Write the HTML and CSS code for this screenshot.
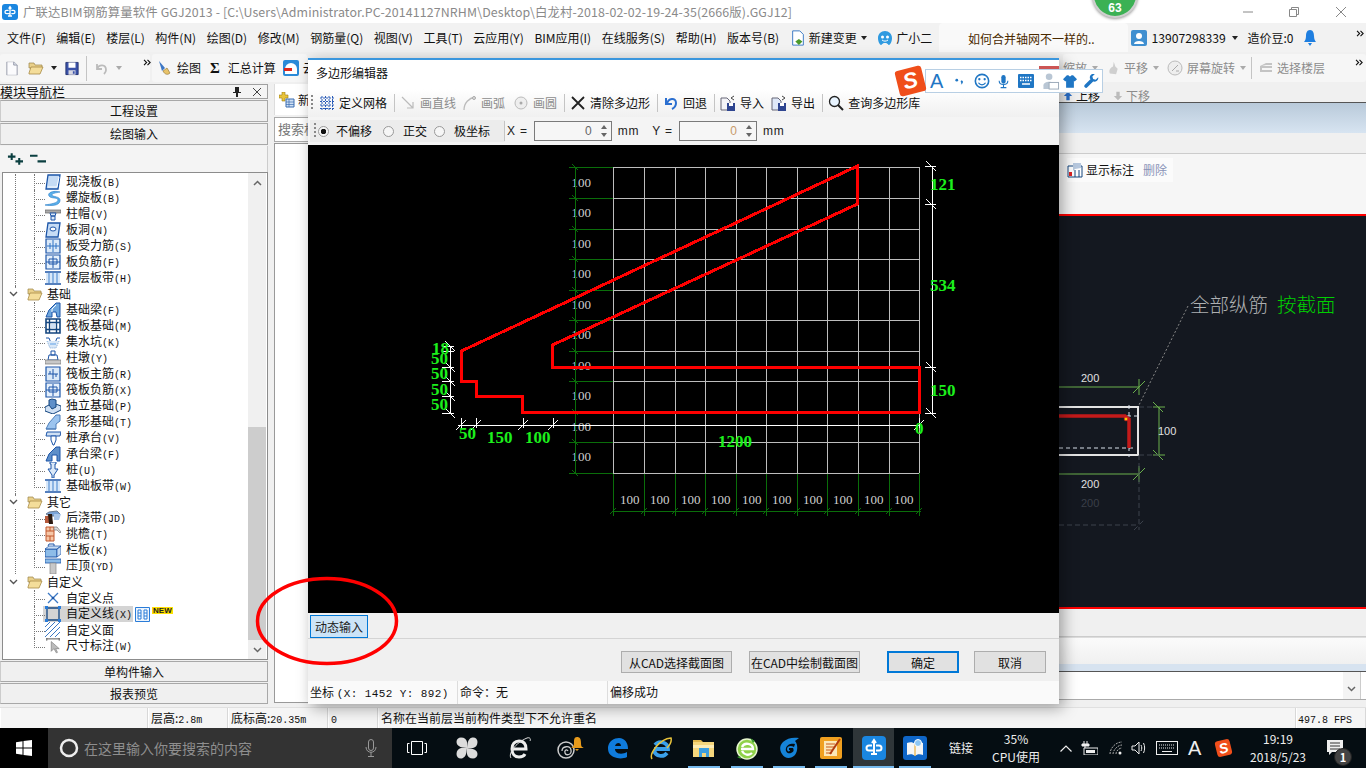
FILE: index.html
```html
<!DOCTYPE html>
<html lang="zh">
<head>
<meta charset="utf-8">
<title>广联达BIM钢筋算量软件 GGJ2013</title>
<link rel="stylesheet" href="styles.css">
</head>
<body>
<svg class="sprite" aria-hidden="true">
  <defs>
    <symbol id="slab" viewBox="0 0 16 16"><path d="M3 1h12l-2 14H1z" fill="#c6dcf5" stroke="#1c55a8" stroke-width="1.3"/><path d="M3 13l9 0 2-10" fill="none" stroke="#fff"/></symbol>
    <symbol id="spiral" viewBox="0 0 16 16"><path d="M15 2C8 0 2 3 4 6s9 1 9 4-7 4-13 5c6 1 14 1 15-4S7 7 7 5s4-2 8-3z" fill="#5ab0ea" stroke="#2a7cc8" stroke-width=".6"/></symbol>
    <symbol id="cap" viewBox="0 0 16 16"><path d="M0 4h16v3H0z" fill="#aaa" stroke="#666" stroke-width=".7"/><path d="M5 7h6l-1 3H6zM6 10h4v4H6z" fill="#dbe9f8" stroke="#1c55a8"/></symbol>
    <symbol id="hole" viewBox="0 0 16 16"><path d="M3 1h12l-2 14H1z" fill="#c6dcf5" stroke="#1c55a8" stroke-width="1.3"/><ellipse cx="8" cy="7" rx="3" ry="2" fill="#fff" stroke="#1c55a8"/></symbol>
    <symbol id="rebar" viewBox="0 0 16 16"><path d="M1 1h14v14H1z" fill="#dbe9f8" stroke="#1c55a8" stroke-width="1.2"/><path d="M2 8h12M8 2v12M5 5v6M11 5v6" fill="none" stroke="#2f72c4"/></symbol>
    <symbol id="neg" viewBox="0 0 16 16"><path d="M1 1h14v14H1z" fill="#e6f0fb" stroke="#1c55a8" stroke-width="1.2"/><path d="M4 5h8v5H4zM1 8h14M8 2v12" fill="none" stroke="#1c55a8"/></symbol>
    <symbol id="band" viewBox="0 0 16 16"><path d="M0 2h16M0 14h16" stroke="#1c55a8" stroke-width="1.6"/><path d="M4 3v10M8 3v10M12 3v10" stroke="#2f72c4" stroke-width="1.2"/><path d="M1 3h14v10H1z" fill="#9cc4ef" opacity=".4"/></symbol>
    <symbol id="beam" viewBox="0 0 16 16"><path d="M1 15l3-7 7-7h4v14h-3l-1-5H7v5z" fill="#6ea6dd" stroke="#1c55a8"/><path d="M7 10V7l4-4" stroke="#fff" fill="none"/></symbol>
    <symbol id="raft" viewBox="0 0 16 16"><path d="M1 1h14v14H1z" fill="#fff" stroke="#14467f" stroke-width="1.6"/><path d="M4.500 1v14M11.500 1v14M1 4.500h14M1 11.500h14" stroke="#14467f" stroke-width="1.4"/><path d="M6 6h4v4H6z" fill="#cfe0f4"/></symbol>
    <symbol id="pit" viewBox="0 0 16 16"><path d="M1 4l3 0 2 5h4l2-5h3" fill="none" stroke="#1c55a8"/><path d="M2 7l3 7h6l3-7" fill="#d8e7f7" stroke="#7fa9d8" stroke-dasharray="1 1"/><path d="M5 9h6v2H5z" fill="#9cc4ef"/></symbol>
    <symbol id="pier" viewBox="0 0 16 16"><path d="M6 1h4v4H6zM4 5h8l1 5H3z" fill="#fff" stroke="#1c55a8"/><path d="M0 10h16v4H0z" fill="#c8c8c8" stroke="#777" stroke-width=".7"/></symbol>
    <symbol id="rafm" viewBox="0 0 16 16"><path d="M1 1h14v14H1z" fill="#dbe9f8" stroke="#1c55a8" stroke-width="1.2"/><path d="M3 8h10M8 3v10M5 5v3M11 8v3" fill="none" stroke="#1c55a8"/></symbol>
    <symbol id="iso" viewBox="0 0 16 16"><path d="M0 9l8-4 8 3v4l-8 4-8-3z" fill="#cfe0f4" stroke="#14467f"/><path d="M4 7V2l3-1 4 1v7l-4 2z" fill="#5e8fc9" stroke="#14467f"/></symbol>
    <symbol id="strip" viewBox="0 0 16 16"><path d="M1 15l3-6 7-8h4v6l-4 3v5z" fill="#9cc4ef" stroke="#4c7db8"/><path d="M1 15h10" stroke="#4c7db8"/></symbol>
    <symbol id="pilecap" viewBox="0 0 16 16"><path d="M2 2h14l-1 4H1z" fill="#cfe0f4" stroke="#1c55a8"/><path d="M6 6h5v4l-2 5H8l-2-5z" fill="#fff" stroke="#1c55a8"/></symbol>
    <symbol id="capbeam" viewBox="0 0 16 16"><path d="M1 15l3-7 7-7h4v14h-3V9H7v6z" fill="#5e8fc9" stroke="#1c55a8"/></symbol>
    <symbol id="pile" viewBox="0 0 16 16"><path d="M5 0h6v2h-1v5h3l-4 6v3H7v-3L3 7h3V2H5z" fill="#dbe9f8" stroke="#1c55a8"/></symbol>
    <symbol id="post" viewBox="0 0 16 16"><path d="M4 2l8-1 3 3-3 2H5L1 4z" fill="#7aa4d8" stroke="#6b7d94"/><path d="M0 6h5l3 7-8 0z" fill="#b5583a"/><path d="M3 4h4l1 10H4z" fill="#2b1a10"/><path d="M9 4h7l-2 6H9z" fill="#a9c6ea"/></symbol>
    <symbol id="eave" viewBox="0 0 16 16"><path d="M1 1h8v14H1z" fill="#f6c6a6" stroke="#c0562c"/><path d="M1 5h8M1 10h8M5 1v4M5 10v5" stroke="#c0562c" fill="none"/><path d="M9 1h3l4 5-1 1-3-3H9z" fill="#ddd" stroke="#777" stroke-width=".7"/></symbol>
    <symbol id="rail" viewBox="0 0 16 16"><path d="M0 7h12v8H0z" fill="#8dbce8" stroke="#1c55a8"/><path d="M0 7l4-3h12l-4 3zM12 7l4-3v8l-4 3z" fill="#c7dcf3" stroke="#1c55a8" stroke-width=".7"/><path d="M3 4l1-2h5v2" fill="none" stroke="#1c55a8"/></symbol>
    <symbol id="top" viewBox="0 0 16 16"><path d="M0 1h16v4H0z" fill="#8dbce8" stroke="#1c55a8" stroke-width=".8"/><path d="M5 5h6v11H5z" fill="#c8c8c8" stroke="#888" stroke-width=".7"/></symbol>
    <symbol id="pt" viewBox="0 0 16 16"><path d="M3 3l10 10M13 3L3 13" stroke="#3b78c4" stroke-width="1.3"/><circle cx="8" cy="8" r="1.300" fill="#1c55a8"/></symbol>
    <symbol id="ln" viewBox="0 0 16 16"><path d="M2 2h12v12H2z" fill="none" stroke="#14467f" stroke-width="1.3"/><path d="M0 0h3v3H0zM13 0h3v3h-3zM0 13h3v3H0zM13 13h3v3h-3z" fill="#2a7cd8"/></symbol>
    <symbol id="hatch" viewBox="0 0 16 16"><path d="M0 5l5-5M0 10L10 0M0 15L15 0M5 15L15 5M10 15l5-5" stroke="#3b78c4"/></symbol>
    <symbol id="dim" viewBox="0 0 16 18"><path d="M1 1h14M1 0v3M15 0v3" stroke="#444" fill="none"/><path d="M6 4v11l3-3 3 5 1-1-2-4h4z" fill="#bbb" stroke="#777" stroke-width=".7"/></symbol>
    <symbol id="folder" viewBox="0 0 16 14"><path d="M1 2h5l1 2h7v3H1z" fill="#e9d08a" stroke="#9c8447" stroke-width=".7"/><path d="M1 12L3 6h12l-3 7H1z" fill="#f4dd9a" stroke="#a88c46" stroke-width=".8"/></symbol>
    <symbol id="floppy" viewBox="0 0 16 16"><path d="M1 1h14v14H1z" fill="#3a52a8" stroke="#1f2d6b"/><path d="M4 1h8v6H4z" fill="#fff"/><path d="M4 10h8v5H4z" fill="#d8d8e2"/><path d="M9 11h2v3H9z" fill="#3a52a8"/></symbol>
    <symbol id="doc" viewBox="0 0 14 16"><path d="M1 0h8l4 4v12H1z" fill="#fbfbfd" stroke="#8a8fa0"/><path d="M9 0v4h4" fill="#dfe3ec" stroke="#8a8fa0"/></symbol>
    <symbol id="smallup" viewBox="0 0 12 12"><path d="M6 1l5 5H8v5H4V6H1z"/></symbol>
    <symbol id="dbl" viewBox="0 0 10 8"><path d="M1 1l3 3-3 3M5 1l3 3-3 3" fill="none" stroke="#111" stroke-width="1.300"/></symbol>
    <symbol id="gglogo" viewBox="0 0 24 24"><path d="M12 5v14M10 7l2-3 2 3M9 18h6" fill="none" stroke="#fff" stroke-width="2"/><path d="M12 14.500H7a2.500 2.500 0 0 1 0-5h3M14 9.500h3a2.500 2.500 0 0 1 0 5h-3" fill="none" stroke="#fff" stroke-width="2"/></symbol>
  </defs>
</svg>

<div class="app">
  <header class="titlebar">
    <span class="app-ico"><svg viewBox="0 0 24 24"><use href="#gglogo"/></svg></span>
    <span class="title-text">广联达BIM钢筋算量软件 GGJ2013 - [C:\Users\Administrator.PC-20141127NRHM\Desktop\白龙村-2018-02-02-19-24-35(2666版).GGJ12]</span>
    <div class="win-ctl">
      <svg class="ctl-min" viewBox="0 0 10 10"><path d="M0 5h10" stroke="#888"/></svg>
      <svg class="ctl-max" viewBox="0 0 10 10"><path d="M.5 2.500h7v7h-7zM2.500 2.500v-2h7v7h-2" fill="none" stroke="#888"/></svg>
      <svg class="ctl-close" viewBox="0 0 10 10"><path d="M0 0l10 10M10 0L0 10" stroke="#888"/></svg>
    </div>
  </header>

  <nav class="menubar">
    <span>文件(F)</span><span>编辑(E)</span><span>楼层(L)</span><span>构件(N)</span><span>绘图(D)</span><span>修改(M)</span><span>钢筋量(Q)</span><span>视图(V)</span><span>工具(T)</span><span>云应用(Y)</span><span>BIM应用(I)</span><span>在线服务(S)</span><span>帮助(H)</span><span>版本号(B)</span>
    <span class="menu-ico"><svg class="i16" viewBox="0 0 16 18"><path d="M2 1h8l4 4v12H2z" fill="#fff" stroke="#2b6fc0"/><path d="M9 10l4 3-4 4-4-4z" fill="#4c9a2a"/></svg>新建变更<i class="caret"></i></span>
    <span class="menu-ico"><svg class="i16" viewBox="0 0 16 16"><path d="M8 1c4 0 7 3 7 7s-2 7-3 7-1-2-4-2-3 2-4 2-3-3-3-7 3-7 7-7z" fill="#2f9ae0"/><circle cx="5.500" cy="7" r="1.500" fill="#fff"/><circle cx="10.500" cy="7" r="1.500" fill="#fff"/><path d="M5 10c2 1.500 4 1.500 6 0" stroke="#fff" fill="none"/></svg>广小二</span>
    <span class="news">如何合并轴网不一样的..</span>
    <span class="menu-ico user"><svg class="i16" viewBox="0 0 16 16"><rect width="16" height="16" rx="2" fill="#3f8fd0"/><circle cx="8" cy="6" r="3" fill="#fff"/><path d="M3 14c0-4 10-4 10 0z" fill="#fff"/></svg><b class="phone">13907298339</b><i class="caret"></i></span>
    <span class="beans">造价豆:0</span>
    <svg class="bell" viewBox="0 0 12 16"><path d="M6 0c3 0 4 3 4 6s1 5 2 6H0c1-1 2-3 2-6s1-6 4-6zM4 13h4l-2 3z" fill="#1f7fe0"/></svg>
    <svg class="more" viewBox="0 0 10 8"><use href="#dbl"/></svg>
  </nav>

  <div class="toolbar">
    <div class="tb-group first">
      <svg class="t-doc" viewBox="0 0 14 16"><use href="#doc"/></svg>
      <svg class="t-open" viewBox="0 0 16 14"><use href="#folder"/></svg>
      <i class="caret"></i>
      <svg class="t-save" viewBox="0 0 16 16"><use href="#floppy"/></svg>
      <i class="vsep"></i>
      <svg class="t-undo" viewBox="0 0 14 14"><path d="M3 3v5h5M3 8c2-5 9-5 9 1 0 2-1 3-2 4" fill="none" stroke="#bbb" stroke-width="1.800"/></svg>
      <i class="caret light"></i>
      <svg class="t-more" viewBox="0 0 10 8"><use href="#dbl"/></svg>
    </div>
    <div class="tb-group second">
      <svg class="i16" viewBox="0 0 16 16"><path d="M2 1l6 7-3 3z" fill="#3c76c4"/><path d="M6 11l4-3 3 5c-2 2-5 2-7-2z" fill="#e8c36a" stroke="#8a6b2a" stroke-width=".6"/></svg><span>绘图</span>
      <b class="sigma">Σ</b><span>汇总计算</span>
      <svg class="i16 cloud" viewBox="0 0 16 16"><rect width="16" height="16" rx="2" fill="#2a8ad8"/><path d="M2 9a6 6 0 0 1 12 0v5H2z" fill="#fff"/><path d="M1 8h8v3H1z" fill="#e0281c"/></svg><span>云</span>
    </div>
    <div class="tb-group third">
      <span class="dis">缩放</span><i class="caret light"></i>
      <svg class="i14" viewBox="0 0 14 18"><path d="M3 16c-2-4 1-8 4-9l1-6 2 6 3 3-2 7z" fill="#cfcfcf"/></svg><span class="dis">平移</span><i class="caret light"></i>
      <svg class="i16" viewBox="0 0 16 16"><circle cx="8" cy="8" r="7" fill="#eee" stroke="#bbb"/><path d="M5 11l6-6M9 11h3" stroke="#aaa"/></svg><span class="dis">屏幕旋转</span><i class="caret light"></i>
      <i class="vsep"></i>
      <svg class="i14" viewBox="0 0 14 14"><path d="M1 5l6-3h6v2H7L3 5h10v2H3v2h10v2H1z" fill="#c4c4c4"/></svg><span class="dis">选择楼层</span>
      <svg class="t-more2" viewBox="0 0 10 8"><use href="#dbl"/></svg>
    </div>
  </div>

  <div class="workspace">
    <aside class="nav">
      <div class="nav-head"><span>模块导航栏</span><span class="nav-btns"><svg class="i10" viewBox="0 0 10 10"><path d="M3 0h4v5h2v1H6v4H4V6H1V5h2z" fill="#222"/></svg><svg class="i10" viewBox="0 0 10 10"><path d="M1 1l8 8M9 1L1 9" stroke="#444"/></svg></span></div>
      <div class="nav-btn">工程设置</div>
      <div class="nav-btn">绘图输入</div>
      <div class="nav-tools">
        <svg class="plus" viewBox="0 0 17 14"><path d="M1 4.500h8M5 1v7M9 9.500h8M13 6v7" stroke="#0b3f40" stroke-width="2.200"/></svg>
        <svg class="plus" viewBox="0 0 17 14"><path d="M0 3.500h8M8 9.500h9" stroke="#0b3f40" stroke-width="2.200"/></svg>
      </div>
      <div class="tree">
        <div class="tree-body">
          <div class="group">
            <div class="kids">
              <div class="leaf"><svg class="i16"><use href="#slab"/></svg><span>现浇板<em>(B)</em></span></div>
              <div class="leaf"><svg class="i16"><use href="#spiral"/></svg><span>螺旋板<em>(B)</em></span></div>
              <div class="leaf"><svg class="i16"><use href="#cap"/></svg><span>柱帽<em>(V)</em></span></div>
              <div class="leaf"><svg class="i16"><use href="#hole"/></svg><span>板洞<em>(N)</em></span></div>
              <div class="leaf"><svg class="i16"><use href="#rebar"/></svg><span>板受力筋<em>(S)</em></span></div>
              <div class="leaf"><svg class="i16"><use href="#neg"/></svg><span>板负筋<em>(F)</em></span></div>
              <div class="leaf"><svg class="i16"><use href="#band"/></svg><span>楼层板带<em>(H)</em></span></div>
            </div>
          </div>
          <div class="group">
            <div class="folder"><svg class="tw" viewBox="0 0 9 6"><path d="M1 1l3.500 3.500L8 1" fill="none" stroke="#555" stroke-width="1.400"/></svg><svg class="fo" viewBox="0 0 16 14"><use href="#folder"/></svg><span>基础</span></div>
            <div class="kids">
              <div class="leaf"><svg class="i16"><use href="#beam"/></svg><span>基础梁<em>(F)</em></span></div>
              <div class="leaf"><svg class="i16"><use href="#raft"/></svg><span>筏板基础<em>(M)</em></span></div>
              <div class="leaf"><svg class="i16"><use href="#pit"/></svg><span>集水坑<em>(K)</em></span></div>
              <div class="leaf"><svg class="i16"><use href="#pier"/></svg><span>柱墩<em>(Y)</em></span></div>
              <div class="leaf"><svg class="i16"><use href="#rafm"/></svg><span>筏板主筋<em>(R)</em></span></div>
              <div class="leaf"><svg class="i16"><use href="#neg"/></svg><span>筏板负筋<em>(X)</em></span></div>
              <div class="leaf"><svg class="i16"><use href="#iso"/></svg><span>独立基础<em>(P)</em></span></div>
              <div class="leaf"><svg class="i16"><use href="#strip"/></svg><span>条形基础<em>(T)</em></span></div>
              <div class="leaf"><svg class="i16"><use href="#pilecap"/></svg><span>桩承台<em>(V)</em></span></div>
              <div class="leaf"><svg class="i16"><use href="#capbeam"/></svg><span>承台梁<em>(F)</em></span></div>
              <div class="leaf"><svg class="i16"><use href="#pile"/></svg><span>桩<em>(U)</em></span></div>
              <div class="leaf"><svg class="i16"><use href="#band"/></svg><span>基础板带<em>(W)</em></span></div>
            </div>
          </div>
          <div class="group">
            <div class="folder"><svg class="tw" viewBox="0 0 9 6"><path d="M1 1l3.500 3.500L8 1" fill="none" stroke="#555" stroke-width="1.400"/></svg><svg class="fo" viewBox="0 0 16 14"><use href="#folder"/></svg><span>其它</span></div>
            <div class="kids">
              <div class="leaf"><svg class="i16"><use href="#post"/></svg><span>后浇带<em>(JD)</em></span></div>
              <div class="leaf"><svg class="i16"><use href="#eave"/></svg><span>挑檐<em>(T)</em></span></div>
              <div class="leaf"><svg class="i16"><use href="#rail"/></svg><span>栏板<em>(K)</em></span></div>
              <div class="leaf"><svg class="i16"><use href="#top"/></svg><span>压顶<em>(YD)</em></span></div>
            </div>
          </div>
          <div class="group last">
            <div class="folder"><svg class="tw" viewBox="0 0 9 6"><path d="M1 1l3.500 3.500L8 1" fill="none" stroke="#555" stroke-width="1.400"/></svg><svg class="fo" viewBox="0 0 16 14"><use href="#folder"/></svg><span>自定义</span></div>
            <div class="kids">
              <div class="leaf"><svg class="i16"><use href="#pt"/></svg><span>自定义点</span></div>
              <div class="leaf selected"><div class="sel"><svg class="i16"><use href="#ln"/></svg><span>自定义线<em>(X)</em></span></div><svg class="i15" viewBox="0 0 15 15"><path d="M.5.500h14v14H.5z" fill="#eef5fd" stroke="#2a7cd8"/><path d="M3 3h3v9H3zM9 3h3v9H9z" fill="#fff" stroke="#2a7cd8"/><path d="M3 6h3M3 9h3M9 6h3M9 9h3" stroke="#2a7cd8"/></svg><b class="new">NEW</b></div>
              <div class="leaf"><svg class="i16"><use href="#hatch"/></svg><span>自定义面</span></div>
              <div class="leaf"><svg class="i16"><use href="#dim"/></svg><span>尺寸标注<em>(W)</em></span></div>
            </div>
          </div>
        </div>
        <div class="vscroll">
          <svg class="arrow" viewBox="0 0 9 6"><path d="M1 5l3.500-3.500L8 5" fill="none" stroke="#666" stroke-width="1.500"/></svg>
          <div class="track"><div class="thumb"></div></div>
          <svg class="arrow" viewBox="0 0 9 6"><path d="M1 1l3.500 3.500L8 1" fill="none" stroke="#666" stroke-width="1.500"/></svg>
        </div>
      </div>
      <div class="nav-btn low">单构件输入</div>
      <div class="nav-btn low">报表预览</div>
    </aside>

    <section class="side2">
      <div class="tab"><svg class="i16" viewBox="0 0 16 16"><path d="M3 0h3v3h3v3H6v3H3V6H0V3h3z" fill="#e8c33c" stroke="#9a7d16" stroke-width=".6"/><path d="M7 7h8v8H7z" fill="#cfe0f4" stroke="#3a6cb0"/><path d="M7 10h8M7 12.500h8M10 7v8" stroke="#3a6cb0" stroke-width=".7"/></svg><span>新</span></div>
      <div class="search">搜索构</div>
      <div class="list"></div>
    </section>

    <main class="main">
      <div class="row-move">
        <svg class="i10 up" viewBox="0 0 12 12"><use href="#smallup"/></svg><span>上移</span>
        <svg class="i10 down" viewBox="0 0 12 12"><path d="M4 1h4v5h3l-5 5-5-5h3z"/></svg><span class="dis">下移</span>
      </div>
      <div class="band"></div>
      <div class="bar1"></div>
      <div class="bar2">
        <div class="hover-box">
          <svg class="i16" viewBox="0 0 16 16"><path d="M1 4h14v11H1z" fill="#fff" stroke="#14467f"/><path d="M6 1h8v5l-6 1-2 2z" fill="#b7c8de"/><path d="M2 10h3v4H2z" fill="#d22"/><path d="M8 8v7M12 8v7" stroke="#14467f"/></svg>
          <span>显示标注</span><span class="del">删除</span>
        </div>
      </div>
      <div class="draw">
        <svg class="draw-svg" viewBox="308 216 1058 391">
          <g fill="none">
            <path class="tdim" d="M1059 387h80M1139 379v16M1133 393l12-12M1059 474h80M1139 466v16M1133 480l12-12M1159 407v48M1153 407h12M1153 455h12M1153 402l10 10M1153 450l10 10"/>
            <path class="box" d="M1059 407h79v48h-79"/>
            <path class="dash-w" d="M1059 448h77M1129 405v52M1120 416h18"/>
            <path class="bar" d="M1059 416h66l4 3v29"/>
            <path class="dash-d" d="M1139 455v75M1059 525h80M1134 530l10-10M1139 455h20M1139 407h14"/>
            <path class="lead" d="M1188 306l-49 99"/>
          </g>
          <circle class="dot" cx="1126" cy="419" r="1.800"/>
          <text class="dl" x="1081" y="382">200</text>
          <text class="dl" x="1081" y="488">200</text>
          <text class="dl faint" x="1081" y="507">200</text>
          <text class="dl" x="1158" y="435">100</text>
          <text class="cad" x="1190" y="312">全部纵筋</text>
          <text class="cad green" x="1277" y="312">按截面</text>
        </svg>
      </div>
      <div class="bar3"></div>
      <div class="bar4"></div>
      <div class="bar5"></div>
      <div class="inputrow">
        <div class="in-scroll"><svg class="arrow" viewBox="0 0 9 6"><path d="M1 1l3.500 3.500L8 1" fill="none" stroke="#666" stroke-width="1.500"/></svg></div>
      </div>
    </main>
  </div>

  <footer class="status">
    <div class="cell c1"></div>
    <div class="cell c2">层高:<em>2.8m</em></div>
    <div class="cell c3">底标高:<em>20.35m</em></div>
    <div class="cell c4"><em>0</em></div>
    <div class="cell c5">名称在当前层当前构件类型下不允许重名</div>
    <div class="cell c6"><em>497.8 FPS</em></div>
  </footer>

  <div class="taskbar">
    <div class="start"><svg class="win" viewBox="0 0 16 16"><path d="M0 2.300l6.500-1v6.200H0zM7.500 1.100L16 0v7.500H7.500zM0 8.500h6.500v6.200l-6.500-1zM7.500 8.500H16V16l-8.500-1.100z" fill="#fff"/></svg></div>
    <div class="tsearch">
      <svg class="cortana" viewBox="0 0 20 20"><circle cx="10" cy="10" r="8" fill="none" stroke="#eee" stroke-width="2.500"/></svg>
      <span>在这里输入你要搜索的内容</span>
      <svg class="mic" viewBox="0 0 12 18"><rect x="3.500" y=".5" width="5" height="11" rx="2.500" fill="none" stroke="#999"/><path d="M1 8c0 7 10 7 10 0M6 13v4M3 17.500h6" fill="none" stroke="#999"/></svg>
    </div>
    <div class="apps">
      <div class="slot"><svg class="ic20" viewBox="0 0 20 14"><path d="M4.500.5h11v13h-11zM2.500 2.500H.5v9h2M17.500 2.500h2v9h-2" fill="none" stroke="#fff"/></svg></div>
      <div class="slot"><svg class="ic22" viewBox="0 0 22 22"><g fill="#dcdcdc"><path id="blade" d="M11 11C6 10.500 2 10 .8 6.500-.3 3 2 .5 5 .5c3.500 0 5.500 2 6 4.500.3 2 0 4.500 0 6z"/><use href="#blade" transform="rotate(90 11 11)"/><use href="#blade" transform="rotate(180 11 11)"/><use href="#blade" transform="rotate(270 11 11)"/></g></svg></div>
      <div class="slot"><svg class="ic24" viewBox="0 0 24 24"><path d="M5 13h14c0-6-3-8-7-8s-7 3-7 8 3 8 7 8c3 0 5-1 6-3" fill="none" stroke="#eee" stroke-width="3"/><path d="M4 22C1 18 8 7 20 2c3-1 4 1 3 3" fill="none" stroke="#ddd"/></svg></div>
      <div class="slot"><svg class="ic28" viewBox="0 0 28 24"><circle cx="9" cy="14" r="8" fill="none" stroke="#ccc" stroke-width="1.500"/><path d="M5 15c0-5 8-6 9-1s-5 6-6 3 2-4 3-2" fill="none" stroke="#ccc" stroke-width="1.300"/><path d="M20 1c3 0 4 2 4 6s1 4 3 5H14c2-1 3-2 3-5s0-6 3-6zM18 13h4l-2 2z" fill="#e89b1c"/></svg></div>
      <div class="slot"><svg class="ic22" viewBox="0 0 22 22"><path d="M1 10C2 4 7 1 12 1c6 0 9 5 9 11H8c0 5 7 6 12 3v5c-6 3-15 1-18-4-1-2-1-4-1-6zm7-1h6c0-4-5-4-6 0z" fill="#0f7bdc"/></svg></div>
      <div class="slot"><svg class="ic24" viewBox="0 0 24 24"><path d="M5 13h14c0-7-9-9-13-4M18 17c-4 5-11 3-13-2" fill="none" stroke="#3aa0ea" stroke-width="3.800"/><path d="M3 23C0 18 10 3 22 2c1 4-2 8-4 10" fill="none" stroke="#e8c33c" stroke-width="1.500"/></svg></div>
      <div class="slot run"><svg class="ic22" viewBox="0 0 22 18"><path d="M0 1h8l2 2H0z" fill="#dfb54c"/><path d="M0 3h21v15H0z" fill="#f5d67c"/><path d="M0 6h21v3H0z" fill="#fdecb4"/><path d="M6 9h10v9h-3v-4H9v4H6z" fill="#3d9fe0"/></svg></div>
      <div class="slot run"><svg class="ic24" viewBox="0 0 24 24"><circle cx="12" cy="13" r="10" fill="#8fd14a" stroke="#e8f7d0" stroke-width="1.500"/><path d="M6 13h12c0-6-9-7-11-2M17 17c-3 3-8 2-10-2" fill="none" stroke="#fff" stroke-width="2.300"/><path d="M15 2l5 3-2 2zM2 21l4 2-1-3z" fill="#3a9a2a"/></svg></div>
      <div class="slot run"><svg class="ic24" viewBox="0 0 24 24"><path d="M6 6C10 2 16 1 22 2l-4 3c3 3 3 10 0 14-4 4-10 4-13-1S3 9 6 6zm3 6c-1 4 2 6 5 5s3-3 2-5h-4v2h1c0 2-3 2-3-1s4-4 7-2l1-3c-3-1-8 0-9 4z" fill="#1583d8"/></svg></div>
      <div class="slot run"><svg class="ic24" viewBox="0 0 24 24"><rect x="1" y="1" width="22" height="22" rx="2" fill="#f0a020"/><path d="M5 5h13v15H5z" fill="#fbe7b8"/><path d="M7 8h9M7 11h9M7 14h7M7 17h6" stroke="#c85a1a"/><path d="M11 18L21 3" stroke="#b03a10" stroke-width="2"/></svg></div>
      <div class="slot active"><span class="gg"><svg viewBox="0 0 24 24"><use href="#gglogo"/></svg></span></div>
      <div class="slot run"><svg class="ic24" viewBox="0 0 24 24"><rect x="0" y="0" width="24" height="24" rx="3" fill="#0f66c8"/><path d="M4 7c3-1 6-1 8 1 2-2 5-2 8-1v12c-3-1-6-1-8 1-2-2-5-2-8-1z" fill="#f6f6f6"/><path d="M12 8v12" stroke="#e8a31c"/><circle cx="15" cy="7" r="3.500" fill="#8ec6f2" stroke="#fff"/></svg></div>
    </div>
    <div class="tray">
      <span class="link">链接</span>
      <div class="cpu"><span>35%</span><span>CPU使用</span></div>
      <svg class="t-up" viewBox="0 0 12 7"><path d="M.5 6.500L6 1l5.500 5.500" fill="none" stroke="#eee" stroke-width="1.200"/></svg>
      <svg class="t-bat" viewBox="0 0 17 14"><path d="M3 0v3M6 0v3M1 3h7v2H1zM4 5v2" stroke="#eee" fill="#eee"/><path d="M3 7h14v7H3z" fill="none" stroke="#eee"/><path d="M5 9h9v3H5z" fill="#eee"/></svg>
      <svg class="t-wifi" viewBox="0 0 14 14"><path d="M1 13C1 7 7 1 13 1M4 13c0-4 5-9 9-9M7 13c0-3 3-6 6-6" fill="none" stroke="#aaa" stroke-dasharray="2 1"/><circle cx="11" cy="12" r="1.500" fill="#eee"/></svg>
      <svg class="t-vol" viewBox="0 0 15 14"><path d="M1 5h3l4-4v12L4 9H1z" fill="none" stroke="#eee"/><path d="M10 4c1 2 1 4 0 6M12.500 2c1.500 3 1.500 7 0 10" fill="none" stroke="#eee"/></svg>
      <svg class="t-kb" viewBox="0 0 22 14"><rect x=".5" y=".5" width="21" height="13" fill="none" stroke="#eee"/><path d="M3 4h16M3 7h16" stroke="#eee" stroke-dasharray="1 1"/><path d="M6 10.500h10" stroke="#eee"/></svg>
      <span class="t-a">A</span>
      <span class="sg small">S</span>
      <div class="clock"><span>19:19</span><span>2018/5/23</span></div>
      <div class="notif">
        <svg class="t-note" viewBox="0 0 16 16"><path d="M0 0h16v12H5l-3 3v-3H0z" fill="#eee"/><path d="M3 3h10M3 6h10M3 9h10" stroke="#333"/></svg>
        <b class="badge">1</b>
      </div>
    </div>
  </div>
</div>

<div class="dialog">
  <div class="dlg-title"><span>多边形编辑器</span><i class="dlg-close"></i></div>
  <div class="dlg-tools">
    <i class="grip"></i>
    <svg class="i14" viewBox="0 0 14 14"><path d="M0 2h14M0 5.500h14M0 9h14M0 12.500h14M2 0v14M5.500 0v14M9 0v14M12.500 0v14" stroke="#2b5cb8" stroke-dasharray="2 1"/></svg><span class="lbl1">定义网格</span>
    <i class="vsep"></i>
    <svg class="i14" viewBox="0 0 14 14"><path d="M1 1l11 11M12 6v6H6" fill="none" stroke="#bbb" stroke-width="1.200"/></svg><span class="lbl dis">画直线</span>
    <svg class="i13" viewBox="0 0 13 14"><path d="M1 14C1 7 6 2 12 1" fill="none" stroke="#bbb" stroke-width="1.300"/><circle cx="11" cy="2" r="1.500" fill="#ddd" stroke="#aaa"/></svg><span class="lbl dis">画弧</span>
    <svg class="i14 circ" viewBox="0 0 14 14"><circle cx="7" cy="7" r="6" fill="#eee" stroke="#bbb"/><circle cx="7" cy="7" r="1.500" fill="#aaa"/></svg><span class="lbl dis">画圆</span>
    <i class="vsep"></i>
    <svg class="i14" viewBox="0 0 14 14"><path d="M1 1l12 12M13 1L1 13" stroke="#222" stroke-width="1.800"/></svg><span class="lbl1">清除多边形</span>
    <i class="vsep"></i>
    <svg class="i14" viewBox="0 0 14 14"><path d="M2 2v6h6M3 8c1-6 9-7 9-1 0 3-2 5-4 6" fill="none" stroke="#2b6fd0" stroke-width="2"/></svg><span class="lbl1">回退</span>
    <i class="vsep tight"></i>
    <svg class="i16" viewBox="0 0 16 16"><path d="M1 3h6l3 3v9H1z" fill="#f4f4f8" stroke="#667"/><path d="M7 8h8v8H7z" fill="#2f4590"/><path d="M9 8h4v3H9z" fill="#fff"/><path d="M14 1l-3 2 3 2" fill="none" stroke="#444"/></svg><span class="lbl2">导入</span>
    <svg class="i16" viewBox="0 0 16 16"><path d="M1 3h6l3 3v9H1z" fill="#dfe8f8" stroke="#667"/><path d="M7 8h8v8H7z" fill="#2f4590"/><path d="M9 8h4v3H9z" fill="#fff"/><path d="M11 1l3 2-3 2" fill="none" stroke="#444"/></svg><span class="lbl2">导出</span>
    <i class="vsep tight"></i>
    <svg class="i16" viewBox="0 0 16 16"><circle cx="6.500" cy="6.500" r="5" fill="#e8f4ff" stroke="#222" stroke-width="1.300"/><path d="M10 10l5 5" stroke="#222" stroke-width="2"/></svg><span class="lbl2">查询多边形库</span>
  </div>
  <div class="dlg-opts">
    <div class="radios">
      <i class="grip"></i>
      <i class="radio on"></i><span class="r1">不偏移</span>
      <i class="radio"></i><span class="r2">正交</span>
      <i class="radio"></i><span class="r3">极坐标</span>
    </div>
    <i class="vsep"></i>
    <span class="lat">X =</span>
    <div class="num"><span>0</span><i class="spin"></i></div>
    <span class="lat">mm</span>
    <span class="lat y">Y =</span>
    <div class="num"><span class="zero">0</span><i class="spin"></i></div>
    <span class="lat">mm</span>
  </div>

  <svg class="canvas" viewBox="308 145 751 468">
    <text class="g" x="571.500" y="187">100</text><text class="g" x="571.500" y="217">100</text><text class="g" x="571.500" y="248">100</text><text class="g" x="571.500" y="278">100</text><text class="g" x="571.500" y="309">100</text><text class="g" x="571.500" y="339">100</text><text class="g" x="571.500" y="370">100</text><text class="g" x="571.500" y="400">100</text><text class="g" x="571.500" y="431">100</text><text class="g" x="571.500" y="461">100</text>
    <path class="dg" d="M575 167V473M569 167H613M569 198H613M569 229H613M569 259H613M569 290H613M569 320H613M569 351H613M569 381H613M569 412H613M569 442H613M569 473H613M572 164l6 6M572 195l6 6M572 226l6 6M572 256l6 6M572 287l6 6M572 317l6 6M572 348l6 6M572 378l6 6M572 409l6 6M572 439l6 6M572 470l6 6"/>
    <path class="dg" d="M613 473V516M644 473V516M675 473V516M705 473V516M736 473V516M766 473V516M797 473V516M827 473V516M858 473V516M889 473V516M919 473V516M612 511H921M610 514l6-6M641 514l6-6M672 514l6-6M702 514l6-6M733 514l6-6M763 514l6-6M794 514l6-6M824 514l6-6M855 514l6-6M886 514l6-6M916 514l6-6"/>
    <path class="grid" d="M613 167V473M644 167V473M675 167V473M705 167V473M736 167V473M766 167V473M797 167V473M827 167V473M858 167V473M889 167V473M919 167V473M613 167H919M613 198H919M613 229H919M613 259H919M613 290H919M613 320H919M613 351H919M613 381H919M613 412H919M613 442H919M613 473H919"/>
    <text class="g" x="620" y="504">100</text><text class="g" x="650" y="504">100</text><text class="g" x="681" y="504">100</text><text class="g" x="711" y="504">100</text><text class="g" x="742" y="504">100</text><text class="g" x="772" y="504">100</text><text class="g" x="803" y="504">100</text><text class="g" x="833" y="504">100</text><text class="g" x="864" y="504">100</text><text class="g" x="894" y="504">100</text>
    <path class="wd" d="M932 166V413M925 166h11M925 204h11M925 367h11M925 413h11M926 161l10 10M926 199l10 10M926 362l10 10M926 408l10 10"/>
    <path class="wd" d="M458 425H919M461 418v10M476 418v10M523 418v10M553 418v10M919 418v10M456 430l10-10M471 430l10-10M518 430l10-10M548 430l10-10M914 430l10-10"/>
    <path class="wd" d="M450 346V413M442 346h12M442 351h12M442 367h12M442 381h12M442 396h12M442 413h12M445 341l10 10M445 362l10 10M445 376l10 10M445 391l10 10M445 408l10 10"/>
    <path class="poly" d="M461.500 351L857.500 166V204L552.500 345V367H919.500V412.500H522.500V396.500H476V381H461.500Z"/>
    <text class="d" x="930" y="190">121</text><text class="d" x="930" y="291">534</text><text class="d" x="930" y="396">150</text>
    <text class="d" x="459" y="439">50</text><text class="d" x="487" y="443">150</text><text class="d" x="525" y="443">100</text><text class="d" x="718" y="447">1200</text><text class="d" x="915" y="434">0</text>
    <text class="d" x="432" y="354">18</text><text class="d" x="431" y="364">50</text><text class="d" x="431" y="379">50</text><text class="d" x="431" y="395">50</text><text class="d" x="431" y="410">50</text>
  </svg>

  <div class="dlg-dyn"><button class="dyn" type="button">动态输入</button></div>
  <div class="dlg-actions">
    <button class="btn" type="button">从CAD选择截面图</button>
    <button class="btn" type="button">在CAD中绘制截面图</button>
    <button class="btn ok" type="button">确定</button>
    <button class="btn cancel" type="button">取消</button>
  </div>
  <div class="dlg-status">
    <div class="st s1">坐标 <em>(X: 1452 Y: 892)</em></div>
    <div class="st s2">命令：无</div>
    <div class="st s3">偏移成功</div>
  </div>
</div>

<div class="badge63"><span>63</span></div>

<div class="ime">
  <span class="sg">S</span>
  <div class="ime-bar">
    <span class="ime-a">A</span>
    <svg class="im-dot" viewBox="0 0 16 16"><circle cx="4" cy="6" r="2" fill="#1f76c4"/><path d="M12 7c2 1 1 5-3 6 2-1 2-3 1-4-1-2 1-3 2-2z" fill="#1f76c4"/></svg>
    <svg class="im-smile" viewBox="0 0 18 18"><circle cx="9" cy="9" r="7.500" fill="none" stroke="#1f76c4" stroke-width="1.800"/><circle cx="6" cy="7" r="1.300" fill="#1f76c4"/><circle cx="12" cy="7" r="1.300" fill="#1f76c4"/><path d="M5 11c2 3 6 3 8 0" fill="none" stroke="#1f76c4" stroke-width="1.400"/></svg>
    <svg class="im-mic" viewBox="0 0 18 18"><rect x="6" y="0" width="6" height="12" rx="3" fill="#1f76c4"/><path d="M3 8c0 7 12 7 12 0M9 14v3M5 17.500h8" fill="none" stroke="#1f76c4" stroke-width="1.500"/></svg>
    <svg class="im-kb" viewBox="0 0 16 14"><rect width="16" height="14" rx="1" fill="#1f76c4"/><path d="M2 3.500h12M2 6.500h12" stroke="#fff" stroke-width="1.500" stroke-dasharray="1.500 1"/><path d="M4 10h8" stroke="#fff" stroke-width="1.500"/></svg>
    <svg class="im-user" viewBox="0 0 18 18"><circle cx="7" cy="4" r="3.500" fill="#b9c6d4"/><path d="M1 13c0-5 12-5 12 0v4H1z" fill="#b9c6d4"/><rect x="7" y="10" width="10" height="7" fill="#fff" stroke="#9aa8b8"/></svg>
    <svg class="im-shirt" viewBox="0 0 18 18"><path d="M5 1h2c1 2 3 2 4 0h2l5 5-3 3-1-1v9H4V8L3 9 0 6z" fill="#1f76c4"/></svg>
    <svg class="im-wrench" viewBox="0 0 18 18"><path d="M17 4l-3 3-3-1-1-3 3-3c-3-1-6 1-6 4 0 1 0 2 1 2L1 13c-1 1-1 2 0 3s2 1 3 0l7-7c3 1 7-2 6-5z" fill="#1f76c4"/></svg>
  </div>
</div>

<svg class="ellipse" viewBox="0 0 150 96"><ellipse cx="73" cy="47" rx="69.500" ry="42.500" fill="none" stroke="#f00" stroke-width="3.500"/></svg>
</body>
</html>
```
FILE: styles.css
```css
* { box-sizing: border-box; }
html, body { margin: 0; padding: 0; }
body {
  width: 1366px; height: 768px; overflow: hidden; position: relative;
  background: #f0f0f0; color: #111;
  font: 12px/16px "Noto Sans CJK SC", "Liberation Sans", sans-serif;
}
i, em, b { font-style: normal; font-weight: normal; }
svg { flex: none; display: block; }
.sprite { position: absolute; width: 0; height: 0; }
.app { display: flex; flex-direction: column; width: 1366px; height: 768px; }
.i10 { width: 10px; height: 10px; }
.i13 { width: 13px; height: 14px; }
.i14 { width: 14px; height: 14px; }
.i15 { width: 15px; height: 15px; }
.i16 { width: 16px; height: 16px; }
.dis { color: #8c8c8c; }
.caret { flex: none; width: 0; height: 0; border: 3px solid transparent; border-top: 4px solid #222; border-bottom: 0; }
.caret.light { border-top-color: #aaa; }
.vsep { flex: none; width: 1px; height: 20px; background: #c4c4c4; }

/* title */
.titlebar { height: 23px; flex: none; background: #fff; display: flex; align-items: center; padding-left: 2px; }
.app-ico { width: 16px; height: 16px; background: #1a86e0; border-radius: 3px; margin-right: 5px; }
.title-text { color: #8a8a8a; font-size: 12.400px; letter-spacing: .12px; white-space: nowrap; }
.win-ctl { margin-left: auto; display: flex; align-items: center; padding-right: 20px; }
.win-ctl svg { width: 10px; height: 10px; }
.ctl-min { margin-right: 36px; }
.ctl-max { margin-right: 37px; }

/* menu */
.menubar { height: 29px; flex: none; display: flex; align-items: center; gap: 10.600px; padding-left: 7px; background: #f2f2f2; white-space: nowrap; position: relative; }
.menubar > * { flex: none; }
.menu-ico { display: flex; align-items: center; gap: 3px; }
.menu-ico .caret { margin-left: 1px; }
.news { width: 189px; height: 29px; margin-left: -4px; background: #f9f9f9; padding-left: 29px; line-height: 31px; color: #4a2a00; border-radius: 4px 4px 0 0; }
.user { margin-left: -7px; gap: 4px; }
.user .caret { margin-left: 2px; }
.phone { font-size: 12.200px; }
.beans { margin-left: -1px; }
.bell { width: 12px; height: 16px; }
.more { width: 9px; height: 7px; margin-left: 29px; margin-top: -8px; }

/* toolbar */
.toolbar { height: 32px; flex: none; display: flex; align-items: flex-start; background: #f0f0f0; white-space: nowrap; }
.tb-group { height: 28px; margin-top: 2px; display: flex; align-items: center; background: #f6f6f6; border-radius: 3px; }
.first { width: 150px; padding-left: 6px; }
.t-doc { width: 12px; height: 15px; }
.t-open { width: 16px; height: 14px; margin-left: 10px; }
.first .caret { margin-left: 7px; }
.t-save { width: 14px; height: 15px; margin-left: 8px; }
.first .vsep { margin-left: 7px; height: 25px; }
.t-undo { width: 14px; height: 14px; margin-left: 7px; }
.first .caret.light { margin-left: 8px; }
.t-more { width: 9px; height: 7px; margin-left: 21px; margin-top: -12px; }
.second { width: 155px; margin-left: 2px; padding-left: 5px; gap: 4px; }
.sigma { font: bold 15px "Liberation Serif", serif; margin-left: 5px; margin-right: 4px; }
.cloud { margin-left: 3px; }
.third { margin-left: auto; width: 303px; gap: 4px; padding-left: 0; }
.third .caret { margin-left: 1px; margin-right: 4px; }
.third .vsep { margin-left: -3px; margin-right: 3px; height: 22px; }
.t-more2 { width: 9px; height: 7px; margin-left: 26px; margin-top: -12px; }

/* workspace */
.workspace { flex: 1; min-height: 0; display: flex; margin-top: 0; }
.nav { width: 268px; flex: none; display: flex; flex-direction: column; }
.nav-head { height: 15px; flex: none; border: 1px solid #a0a0a0; border-width: 1px 1px 1px 0; display: flex; align-items: center; justify-content: space-between; line-height: 13px; font-size: 13px; padding-right: 5px; background: #f4f4f4; margin-bottom: 1px; }
.nav-btns { display: flex; gap: 10px; }
.nav-btn { height: 22px; flex: none; margin-bottom: 1px; border: 1px solid #a8a8a8; border-left-color: #ccc; background: #f0f0f0; text-align: center; line-height: 20px; }
.nav-tools { height: 26px; flex: none; display: flex; align-items: center; gap: 7px; padding-left: 7px; background: #f4f4f4; border-right: 1px solid #ccc; }
.plus { width: 16px; height: 14px; }
.tree { flex: 1; min-height: 0; margin-left: 2px; border: 1px solid #8c8c8c; background: #fff; display: flex; }
.tree-body { flex: 1; padding-top: 1px; overflow: hidden; }
.group { margin-left: 12px; border-left: 1px dotted #777; }
.group.last { border-left-color: transparent; }
.folder { position: relative; height: 16px; display: flex; align-items: center; padding-left: 11px; gap: 4px; }
.fo { width: 16px; height: 14px; }
.tw { position: absolute; left: -7px; top: 5px; width: 9px; height: 6px; box-shadow: 0 0 0 3px #fff; background: #fff; }
.kids { margin-left: 18px; }
.leaf { position: relative; height: 16px; display: flex; align-items: center; padding-left: 11px; gap: 5px; line-height: 16px; white-space: nowrap; }
.leaf::before { content: ""; position: absolute; left: 0; top: 0; width: 10px; height: 9px; border-left: 1px dotted #777; border-bottom: 1px dotted #777; }
.leaf::after { content: ""; position: absolute; left: 0; top: 9px; height: 7px; border-left: 1px dotted #777; }
.leaf:last-child::after { display: none; }
.leaf em { font: 10px/16px "Liberation Mono", monospace; }
.sel { display: flex; align-items: center; gap: 5px; background: #d4d4d4; height: 16px; margin-left: -2px; padding-left: 2px; padding-right: 1px; }
.selected { gap: 2px; }
.new { font: bold 8px/7px "Liberation Sans", sans-serif; background: #ffe000; color: #222; padding: 0 1px; margin-top: -7px; margin-left: 0; }
.vscroll { width: 18px; flex: none; background: #f0f0f0; display: flex; flex-direction: column; align-items: center; margin-right: 1px; }
.arrow { width: 9px; height: 6px; margin: 7px 0; }
.track { flex: 1; width: 100%; padding-top: 234px; }
.thumb { height: 213px; background: #cdcdcd; }
.low { height: 21px; line-height: 19px; margin: 1px 0 0; }

.side2 { width: 40px; flex: none; padding-left: 6px; display: flex; flex-direction: column; padding-bottom: 1px; overflow: hidden; }
.tab { height: 31px; background: #fff; display: flex; align-items: center; gap: 3px; padding-left: 4px; border-left: 1px solid #ddd; white-space: nowrap; }
.search { height: 25px; margin-top: 2px; border: 1px solid #aaa; border-right: 0; background: #fff; color: #777; padding-left: 3px; line-height: 22px; white-space: nowrap; font-size: 13px; }
.list { flex: 1; margin-top: 1px; background: #fff; border: 1px solid #999; border-right: 0; }

.main { flex: 1; min-width: 0; display: flex; flex-direction: column; }
.row-move { height: 19px; flex: none; display: flex; align-items: flex-end; justify-content: flex-end; border-bottom: 1px solid #555; padding-right: 216px; gap: 3px; overflow: hidden; line-height: 13px; background: #f0f0f0; }
.up { fill: #2a6fc8; margin-bottom: 1px; }
.down { fill: #bbb; margin-left: 10px; margin-bottom: 1px; }
.band { height: 30px; flex: none; background: linear-gradient(#b9cada, #d7e4f1); }
.bar1 { height: 21px; flex: none; background: #f0f0f0; border-bottom: 1px solid #ccc; }
.bar2 { height: 60px; flex: none; background: #f6f6f6; padding: 4px 0 0 759px; }
.hover-box { width: 106px; height: 24px; background: #fbfbfb; display: flex; align-items: center; gap: 3px; }
.del { color: #8a93b8; margin-left: 6px; }
.draw { height: 395px; flex: none; border-top: 2px solid #f00; border-bottom: 2px solid #f00; background: #141820; }
.draw-svg { width: 1058px; height: 391px; }
.tdim { stroke: #6ab04c; }
.box { stroke: #e4e4e4; stroke-width: 2; }
.bar { stroke: #c41a1a; stroke-width: 3.500; }
.dash-w { stroke: #d8e0ea; stroke-dasharray: 4 3; }
.dash-d { stroke: #3c424c; stroke-dasharray: 5 3; }
.lead { stroke: #888; stroke-dasharray: 2 2; }
.dot { fill: #f4d000; stroke: #d22; stroke-width: .8; }
.dl { font: 11px "Liberation Sans", sans-serif; fill: #e0e0e0; }
.dl.faint { fill: #3a3f48; }
.cad { font: 300 19.500px "Noto Sans CJK SC", sans-serif; fill: #aeb0b2; }
.cad.green { fill: #00d000; }
.bar3 { height: 28px; flex: none; background: #f0f0f0; border-bottom: 1px solid #ccc; }
.bar4 { height: 27px; flex: none; background: linear-gradient(#fbfbfb, #f0f0f0); border-top: 1px solid #ddd; }
.bar5 { height: 8px; flex: none; background: #d7e3f0; border-bottom: 1px solid #555; }
.inputrow { height: 28px; flex: none; background: #fff; display: flex; justify-content: flex-end; border-bottom: 1px solid #aaa; }
.in-scroll { width: 18px; background: #f4f4f4; margin-right: 5px; border-right: 1px solid #ccc; display: flex; align-items: flex-end; justify-content: center; }

/* status */
.status { height: 21px; flex: none; margin-top: 3px; display: flex; background: #f5f5f5; border-top: 1px solid #e0e0e0; white-space: nowrap; line-height: 20px; }
.cell { border-right: 1px solid #d8d8d8; border-left: 1px solid #fff; padding-left: 2px; overflow: hidden; }
.cell em { font: 10px/20px "Liberation Mono", monospace; }
.c1 { width: 148px; }
.c2 { width: 80px; }
.c3 { width: 100px; }
.c4 { width: 50px; }
.c5 { flex: 1; padding-left: 2px; }
.c6 { width: 70px; padding-left: 1px; }

/* taskbar */
.taskbar { height: 40px; flex: none; display: flex; background: #050d12; color: #eee; white-space: nowrap; }
.start { width: 48px; background: #000; display: flex; align-items: center; justify-content: center; }
.win { width: 16px; height: 16px; }
.tsearch { width: 344px; background: #333; display: flex; align-items: center; padding-left: 11px; }
.cortana { width: 20px; height: 20px; }
.tsearch span { color: #8e8e8e; font-size: 14px; margin-left: 5px; }
.mic { width: 12px; height: 18px; margin-left: auto; margin-right: 15px; }
.apps { display: grid; grid-template-columns: 49px 51px 53px 52px 42px 44px 42px 44px 39px 45px 41px 42px; }
.slot { display: flex; align-items: center; justify-content: center; }
.ic20 { width: 20px; height: 14px; }
.ic22 { width: 22px; height: 22px; }
.ic24 { width: 24px; height: 24px; }
.ic28 { width: 28px; height: 24px; }
.run { background: linear-gradient(#76b9ed, #76b9ed) center bottom / 32px 2px no-repeat; }
.active { background: linear-gradient(#76b9ed, #76b9ed) center bottom / 100% 2px no-repeat, #2f3639; }
.gg { width: 24px; height: 24px; background: #1a86e0; border-radius: 4px; display: block; }
.tray { flex: 1; display: flex; align-items: center; position: relative; }
.link { margin-left: 13px; }
.cpu { display: flex; flex-direction: column; align-items: center; width: 48px; margin-left: 19px; line-height: 18px; }
.t-up { width: 12px; height: 7px; margin-left: 20px; }
.t-bat { width: 17px; height: 14px; margin-left: 9px; }
.t-wifi { width: 14px; height: 14px; margin-left: 11px; }
.t-vol { width: 15px; height: 14px; margin-left: 8px; }
.t-kb { width: 22px; height: 14px; margin-left: 10px; }
.t-a { font: 20px "Liberation Sans", sans-serif; margin-left: 10px; width: 14px; }
.sg { flex: none; display: block; width: 26px; height: 24px; background: #f04e1a; color: #fff; border-radius: 3px; transform: rotate(-14deg); font: italic bold 22px/24px "Liberation Sans", sans-serif; text-align: center; }
.sg.small { width: 15px; height: 16px; font-size: 14px; line-height: 16px; margin-left: 14px; }
.clock { display: flex; flex-direction: column; align-items: center; width: 60px; margin-left: 17px; line-height: 18px; }
.notif { position: relative; margin-left: 19px; }
.t-note { width: 16px; height: 16px; }
.badge { position: absolute; left: 7px; top: 8px; width: 18px; height: 18px; border-radius: 50%; background: #444; border: 1px solid #222; color: #fff; font-size: 11px; line-height: 16px; text-align: center; font-weight: bold; }

/* dialog */
.dialog { position: absolute; left: 308px; top: 58px; width: 751px; height: 646px; background: #f0f0f0; border-top: 2px solid #3a96dd; box-shadow: 4px 4px 14px rgba(0,0,0,.35); display: flex; flex-direction: column; white-space: nowrap; }
.dlg-title { height: 29px; flex: none; background: #fff; padding: 5px 8px; position: relative; }
.dlg-close { position: absolute; right: 0; top: 6px; width: 20px; height: 4px; background: #c55; }
.dlg-tools { height: 28px; flex: none; display: flex; align-items: center; gap: 7px; padding-left: 3px; background: linear-gradient(#fff, #f0f0f0); }
.dlg-tools .vsep { height: 18px; margin-right: -1px; }
.dlg-tools .vsep.tight { margin-right: -2px; }
.dlg-tools span { margin-left: -2px; }
.dlg-tools .lbl2 { margin-left: -3px; }
.circ { margin-left: 2px; }
.grip { flex: none; width: 2px; height: 16px; background: repeating-linear-gradient(#888 0 2px, transparent 2px 4px); }
.dlg-opts { height: 28px; flex: none; display: flex; align-items: center; background: #f4f4f4; border-bottom: 0; }
.radios { width: 195px; flex: none; margin-left: 2px; height: 22px; background: #ececec; display: flex; align-items: center; padding-left: 4px; }
.radio { flex: none; width: 11px; height: 11px; border: 1px solid #999; border-radius: 50%; background: #f6f6f6; }
.radio.on { background: radial-gradient(#111 0 2.500px, #f6f6f6 3px); margin-left: 2px; }
.r1 { margin-left: 7px; margin-right: 11px; }
.r2 { margin-left: 9px; margin-right: 7px; }
.r3 { margin-left: 9px; }
.dlg-opts .vsep { margin-left: -1px; }
.lat { font: 12px "Liberation Sans", sans-serif; color: #222; letter-spacing: .8px; }
.vsep + .lat { margin-left: 2px; }
.num { width: 78px; height: 20px; border: 1px solid #7a7a7a; margin: 0 6px; background: #f6f6f6; position: relative; text-align: right; padding-right: 19px; line-height: 19px; font-family: "Liberation Sans", sans-serif; color: #666; }
.zero { color: #c89a6a; }
.spin { position: absolute; right: 4px; top: 3px; width: 0; height: 0; border: 3px solid transparent; border-bottom: 4px solid #666; border-top: 0; }
.spin::after { content: ""; position: absolute; left: -3px; top: 8px; border: 3px solid transparent; border-top: 4px solid #666; border-bottom: 0; }
.lat.y { margin-left: 13px; }
.canvas { width: 751px; height: 468px; flex: none; background: #000; }
.g { font: 13px "Liberation Serif", serif; fill: #cfcfcf; }
.dg { stroke: #0a6e0a; fill: none; shape-rendering: crispEdges; }
.grid { stroke: #bdbdbd; fill: none; shape-rendering: crispEdges; }
.wd { stroke: #fff; fill: none; shape-rendering: crispEdges; }
.poly { stroke: #f00; stroke-width: 3; fill: none; shape-rendering: crispEdges; }
.d { font: bold 17px "Liberation Serif", serif; fill: #1cf01c; }
.dlg-dyn { height: 25px; flex: none; padding: 2px 2px 0; }
.dyn { width: 58px; height: 23px; padding: 0; border: 1px solid #0078d7; background: #cce4f7; font: 12px/20px "Noto Sans CJK SC", sans-serif; color: #222; display: block; }
.dlg-actions { height: 43px; flex: none; display: flex; align-items: flex-start; gap: 17px; padding: 12px 0 0 313px; border-top: 1px solid #d4d4d4; }
.btn { width: 111px; height: 22px; flex: none; padding: 0; border: 1px solid #adadad; background: #e1e1e1; font: 12px/19px "Noto Sans CJK SC", sans-serif; color: #111; }
.ok { width: 72px; margin-left: 10px; border: 2px solid #0078d7; }
.cancel { width: 72px; margin-left: -2px; }
.dlg-status { flex: 1; display: flex; background: #fafafa; margin-top: 0; line-height: 21px; }
.st { padding-left: 2px; border-right: 1px solid #ddd; }
.st em { font: 11px/20px "Liberation Mono", monospace; letter-spacing: .4px; }
.s1 { width: 150px; }
.s2 { width: 150px; }
.s3 { flex: 1; border-right: 0; }

/* overlays */
.badge63 { position: absolute; left: 1092px; top: -28px; width: 46px; height: 46px; border-radius: 50%; background: #3bb154; border: 2px solid #cfcfcf; box-shadow: 0 1px 3px rgba(0,0,0,.4); color: #fff; font: bold 12px/14px "Liberation Sans", sans-serif; text-align: center; padding-top: 27px; }
.ime { position: absolute; left: 897px; top: 68px; display: flex; align-items: center; }
.ime .sg { width: 27px; height: 26px; position: relative; z-index: 1; line-height: 26px; }
.ime-bar { width: 178px; height: 24px; background: #fff; border: 1px solid #b8cfe4; display: flex; align-items: center; margin-left: 1px; padding-left: 4px; gap: 8px; }
.ime-a { font: 20px/22px "Liberation Sans", sans-serif; color: #1f76c4; width: 15px; margin-right: 1px; }
.im-dot { width: 11px; height: 15px; }
.im-smile { width: 16px; height: 16px; margin-left: 1px; }
.im-mic { width: 13px; height: 17px; margin-left: -1px; }
.im-kb { width: 16px; height: 14px; }
.im-user { width: 18px; height: 17px; }
.im-shirt { width: 14px; height: 15px; margin-left: -5px; }
.im-wrench { width: 15px; height: 15px; margin-left: -1px; }
.ellipse { position: absolute; left: 254px; top: 574px; width: 150px; height: 96px; }
```
